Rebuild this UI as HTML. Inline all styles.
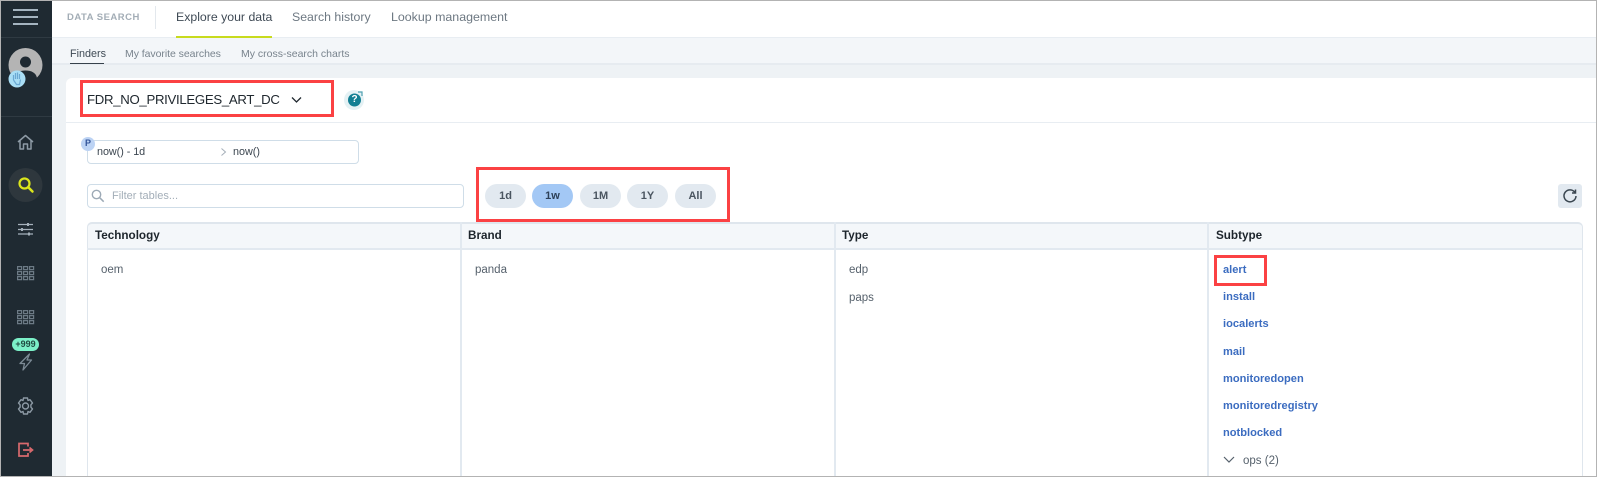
<!DOCTYPE html>
<html><head><meta charset="utf-8">
<style>
html,body{margin:0;padding:0;width:1597px;height:477px;overflow:hidden;background:#fff}
body{position:relative;font-family:"Liberation Sans",sans-serif}
.a{position:absolute}
.t{position:absolute;white-space:nowrap;line-height:16px;height:16px}
.r{position:absolute;border:3px solid #fb4143;box-sizing:border-box}
.b{position:absolute;top:184px;width:41px;height:24px;border-radius:12px;background:#e2e9f0;color:#4a5560;font-size:11px;font-weight:bold;text-align:center;line-height:24px}
.l{color:#3b6cc0;font-weight:bold;font-size:11.1px;left:1223px}
.g{color:#56616c;font-size:11.5px}
.h{color:#1d252c;font-weight:bold;font-size:11.7px;top:227px}
svg{position:absolute;overflow:visible}
</style></head><body>
<div class="a" style="left:1px;top:0;width:51px;height:477px;background:#1f2a32"></div>
<div class="a" style="left:1px;top:37px;width:51px;height:1px;background:#2f3a42"></div>
<div class="a" style="left:1px;top:116px;width:51px;height:1px;background:#2f3a42"></div>
<div class="a" style="left:13px;top:9px;width:25px;height:2px;background:#a5b4c0"></div>
<div class="a" style="left:13px;top:16px;width:25px;height:2px;background:#a5b4c0"></div>
<div class="a" style="left:13px;top:23px;width:25px;height:2px;background:#a5b4c0"></div>
<svg style="left:0;top:0" width="52" height="477">
<circle cx="25.5" cy="65" r="17" fill="#b4b4b4"/>
<circle cx="25.5" cy="62" r="5.5" fill="#1f2a32"/>
<path d="M14.500 78C15.500 72.500 20 70.500 25.500 70.500C31 70.500 36 72.500 37 78A17 17 0 0 1 14.500 78z" fill="#1f2a32"/>
<circle cx="17" cy="79" r="8.5" fill="#a9def5"/>
<path d="M13.500 80v-5M15.500 79v-6M17.500 79v-6.500M19.500 79v-5M13.500 80l3 4.500h3l1-5" stroke="#6ba9d3" stroke-width="1.200" fill="none"/>
<path d="M18 142l7.500-6.500 7.500 6.500M20 140.500v8.500h3.500v-5h4v5h3.500v-8.500" stroke="#8d9aa5" stroke-width="1.500" fill="none" stroke-linejoin="round"/>
<circle cx="25.500" cy="185" r="17" fill="#2e373d"/>
<circle cx="24.500" cy="183.500" r="5" stroke="#dbe61c" stroke-width="2.200" fill="none"/>
<path d="M28.500 187.500l4 4" stroke="#dbe61c" stroke-width="2.500" stroke-linecap="round"/>
<path d="M18 224.500h15M18 229.500h15M18 234h15" stroke="#a5b1bb" stroke-width="1.200"/>
<path d="M28 223v3M22 228v3M29 232.500v3" stroke="#a5b1bb" stroke-width="2"/>
<g fill="none" stroke="#6c7a85" stroke-width="1.200">
<path d="M17.600 266.600h4v3h-4zM23.600 266.600h4v3h-4zM29.600 266.600h4v3h-4zM17.600 271.600h4v3h-4zM23.600 271.600h4v3h-4zM29.600 271.600h4v3h-4zM17.600 276.600h4v3h-4zM23.600 276.600h4v3h-4zM29.600 276.600h4v3h-4z"/>
<path d="M17.600 310.600h4v3h-4zM23.600 310.600h4v3h-4zM29.600 310.600h4v3h-4zM17.600 315.600h4v3h-4zM23.600 315.600h4v3h-4zM29.600 315.600h4v3h-4zM17.600 320.600h4v3h-4zM23.600 320.600h4v3h-4zM29.600 320.600h4v3h-4z"/>
<path d="M29.500 354l-9.500 9.500h4.500l-1.500 6.500 8.500-10h-4.500z" stroke="#7c8a95" stroke-width="1.300" stroke-linejoin="round"/>
<circle cx="25.500" cy="406" r="3" stroke="#8d9aa5" stroke-width="1.400"/>
<path d="M23.500 398h4l.5 2.500 2-.8 2.500 3.300-1.600 1.800v2.400l1.600 1.800-2.500 3.300-2-.8-.5 2.500h-4l-.5-2.500-2 .8-2.500-3.300 1.600-1.800v-2.400l-1.600-1.800 2.500-3.300 2 .8z" stroke="#8d9aa5" stroke-width="1.400" stroke-linejoin="round"/>
<path d="M28 446.500v-3h-9v12.500h9v-3M23 450h9M29.500 447.500l3 2.500-3 2.500" stroke="#d8696d" stroke-width="1.700"/>
</g>
</svg>
<div class="a" style="left:12px;top:338px;width:27px;height:13px;border-radius:7px;background:#7cf0c8;color:#1f4a40;font-size:9px;font-weight:bold;text-align:center;line-height:13px">+999</div>

<div class="a" style="left:52px;top:37px;width:1545px;height:1px;background:#e8edf2"></div>
<div class="a" style="left:52px;top:38px;width:1545px;height:25px;background:#f3f6f9"></div>
<div class="a" style="left:52px;top:63px;width:1545px;height:2px;background:#e6ebf0"></div>
<div class="a" style="left:52px;top:65px;width:1545px;height:412px;background:#eef2f5"></div>
<div class="a" style="left:66px;top:78px;width:1531px;height:399px;background:#fff;border-top-left-radius:6px"></div>
<div class="a" style="left:66px;top:122px;width:1531px;height:1px;background:#e8edf2"></div>
<div class="a" style="left:155px;top:6px;width:1px;height:23px;background:#e3e8ed"></div>

<div class="t" style="left:67px;top:10px;font-size:9.500px;font-weight:bold;letter-spacing:.5px;color:#a3adb6">DATA SEARCH</div>
<div class="t" style="left:176px;top:9px;font-size:12.300px;color:#3f4a55">Explore your data</div>
<div class="a" style="left:176px;top:36px;width:96px;height:2px;background:#c8db1e"></div>
<div class="t" style="left:292px;top:9px;font-size:12.300px;color:#6d7882">Search history</div>
<div class="t" style="left:391px;top:9px;font-size:12.400px;color:#6d7882">Lookup management</div>
<div class="t" style="left:70px;top:46px;font-size:10.800px;color:#3f4a55">Finders</div>
<div class="a" style="left:70px;top:63px;width:34px;height:1px;background:#36414b"></div>
<div class="t" style="left:125px;top:46px;font-size:10.500px;letter-spacing:-.05px;color:#78838d">My favorite searches</div>
<div class="t" style="left:241px;top:46px;font-size:10.500px;color:#78838d">My cross-search charts</div>

<div class="t" style="left:87px;top:92px;font-size:13.200px;letter-spacing:-.3px;color:#20282f">FDR_NO_PRIVILEGES_ART_DC</div>
<svg style="left:0;top:0" width="600" height="230">
<path d="M292 97.500l4.500 4.500 4.500-4.500" stroke="#20282f" stroke-width="1.300" fill="none"/>
<circle cx="354" cy="100" r="10" fill="#e4f1f4"/>
<circle cx="354.500" cy="100" r="6.500" fill="#127f93"/>
<path d="M358 92h4v4" stroke="#4c9fb0" stroke-width="1.200" fill="none"/>
<circle cx="96.500" cy="194.500" r="4.200" stroke="#9daab6" stroke-width="1.400" fill="none"/>
<path d="M99.700 197.700l4 4" stroke="#9daab6" stroke-width="1.500" fill="none"/>
<path d="M221.500 148.500l4 3.500-4 3.500" stroke="#a5afb9" stroke-width="1" fill="none"/>
</svg>
<div class="t" style="left:350px;top:92px;width:9px;text-align:center;font-size:10px;font-weight:bold;color:#fff">?</div>
<div class="a" style="left:87px;top:140px;width:272px;height:24px;box-sizing:border-box;border:1px solid #cfdde8;border-radius:4px"></div>
<div class="a" style="left:81px;top:137px;width:14px;height:14px;border-radius:7px;background:#bcd3f4;color:#33559a;font-size:9px;font-weight:bold;text-align:center;line-height:13px">P</div>
<div class="t" style="left:97px;top:144px;font-size:10.800px;letter-spacing:-.05px;color:#3c4650">now() - 1d</div>
<div class="t" style="left:233px;top:144px;font-size:10.800px;color:#3c4650">now()</div>
<div class="a" style="left:87px;top:184px;width:377px;height:24px;box-sizing:border-box;border:1px solid #cfdde8;border-radius:4px"></div>
<div class="t" style="left:112px;top:188px;font-size:11px;color:#a3aeb8">Filter tables...</div>
<div class="b" style="left:485px">1d</div>
<div class="b" style="left:532px;background:#a3c8f5;color:#2d4058">1w</div>
<div class="b" style="left:580px">1M</div>
<div class="b" style="left:627px">1Y</div>
<div class="b" style="left:675px">All</div>
<div class="r" style="left:80px;top:80px;width:254px;height:37px"></div>
<div class="r" style="left:476px;top:167px;width:254px;height:55px"></div>
<div class="a" style="left:1558px;top:184px;width:24px;height:24px;border-radius:3px;background:#e2e9f0"></div>
<svg style="left:1558px;top:184px" width="24" height="24"><path d="M17 8.500A6 6 0 1 0 18 12M17.500 5.500v3.500h-3.500" stroke="#3a4650" stroke-width="1.500" fill="none"/></svg>

<div class="a" style="left:87px;top:222px;width:1495px;height:26px;background:#f4f7fa;border-radius:5px 5px 0 0"></div>
<div class="a" style="left:87px;top:222px;width:1496px;height:260px;box-sizing:border-box;border:1px solid #dfe6ed;border-top-width:2px;border-radius:5px"></div>
<div class="a" style="left:87px;top:248px;width:1496px;height:2px;background:#e2e9f0"></div>
<div class="a" style="left:460px;top:222px;width:2px;height:255px;background:#e2e9f0"></div>
<div class="a" style="left:834px;top:222px;width:2px;height:255px;background:#e2e9f0"></div>
<div class="a" style="left:1207px;top:222px;width:2px;height:255px;background:#e2e9f0"></div>
<div class="t h" style="left:95px;top:228px">Technology</div>
<div class="t h" style="left:468px;top:228px">Brand</div>
<div class="t h" style="left:842px;top:228px">Type</div>
<div class="t h" style="left:1216px;top:228px">Subtype</div>
<div class="t g" style="left:101px;top:262px">oem</div>
<div class="t g" style="left:475px;top:262px">panda</div>
<div class="t g" style="left:849px;top:262px">edp</div>
<div class="t g" style="left:849px;top:290px">paps</div>
<div class="t l" style="top:262px">alert</div>
<div class="t l" style="top:289px">install</div>
<div class="t l" style="top:316px">iocalerts</div>
<div class="t l" style="top:344px">mail</div>
<div class="t l" style="top:371px">monitoredopen</div>
<div class="t l" style="top:398px">monitoredregistry</div>
<div class="t l" style="top:425px">notblocked</div>
<svg style="left:1223px;top:454px" width="12" height="10"><path d="M1 3l5 5 5-5" stroke="#56616c" stroke-width="1.200" fill="none"/></svg>
<div class="t g" style="left:1243px;top:453px">ops (2)</div>
<div class="r" style="left:1214px;top:255px;width:53px;height:31px"></div>

<div class="a" style="left:0;top:0;width:1597px;height:1px;background:#b3b3b3"></div>
<div class="a" style="left:0;top:476px;width:1597px;height:1px;background:#b3b3b3"></div>
<div class="a" style="left:0;top:0;width:1px;height:477px;background:#b3b3b3"></div>
<div class="a" style="left:1596px;top:0;width:1px;height:477px;background:#b3b3b3"></div>
</body></html>
